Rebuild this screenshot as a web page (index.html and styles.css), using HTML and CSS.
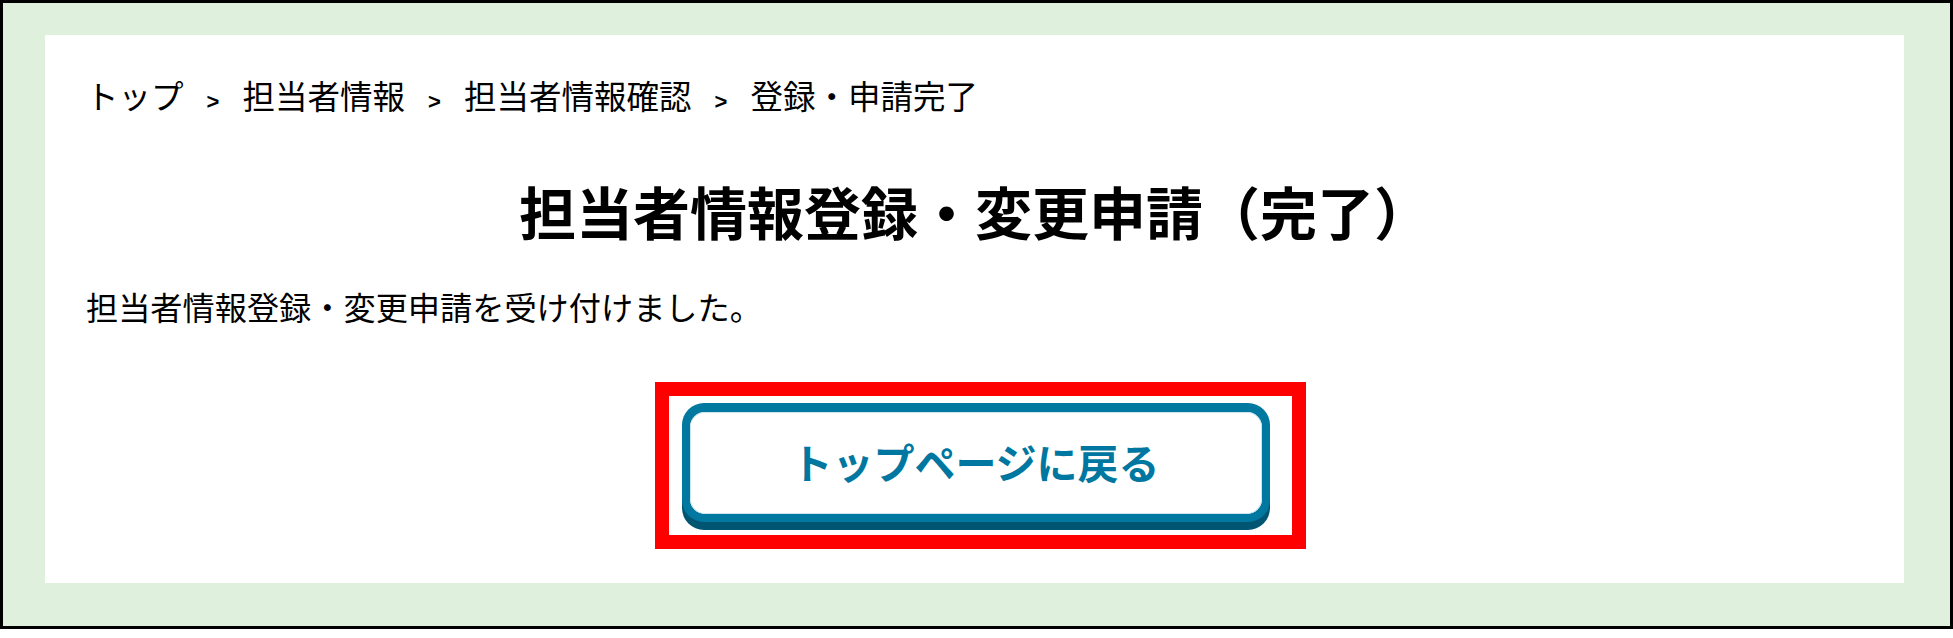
FILE: index.html
```html
<!DOCTYPE html>
<html lang="ja">
<head>
<meta charset="utf-8">
<title>担当者情報登録・変更申請（完了）</title>
<link rel="stylesheet" href="styles.css">
</head>
<body>
<div class="frame">
  <main class="panel">
    <nav class="crumbs">
      <span class="crumb">トップ</span>
      <span class="sep">&gt;</span>
      <span class="crumb">担当者情報</span>
      <span class="sep">&gt;</span>
      <span class="crumb">担当者情報確認</span>
      <span class="sep">&gt;</span>
      <span class="crumb">登録・申請完了</span>
    </nav>
    <h1 class="title">担当者情報登録・変更申請（完了）</h1>
    <p class="message">担当者情報登録・変更申請を受け付けました。</p>
    <div class="action-row">
      <div class="highlight">
        <a class="btn" href="#"><span class="btn-face">トップページに戻る</span></a>
      </div>
    </div>
  </main>
</div>
</body>
</html>
```

FILE: styles.css
```css
html, body {
  margin: 0;
  padding: 0;
  background: #ffffff;
}

body {
  width: 1953px;
  height: 638px;
  overflow: hidden;
  font-family: "Noto Sans CJK JP", "Noto Sans", sans-serif;
  color: #000000;
}

.frame {
  box-sizing: border-box;
  width: 1953px;
  height: 629px;
  border: 3px solid #000000;
  background: #dff0dc;
  padding: 32px 46px 43px 42px;
}

.panel {
  box-sizing: border-box;
  display: block;
  width: 1859px;
  height: 548px;
  background: #ffffff;
  padding: 44px 40px 0 41px;
}

.crumbs {
  display: flex;
  align-items: baseline;
  font-size: 32.5px;
  line-height: 32px;
  height: 32px;
}

.crumb {
  white-space: nowrap;
}

.sep {
  display: inline-block;
  width: 59px;
  text-align: center;
  font-family: "Liberation Sans", sans-serif;
  font-size: 22px;
  font-weight: 700;
  line-height: 21px;
}

.title {
  margin: 71px 0 0 0;
  font-size: 57px;
  line-height: 57px;
  font-weight: 700;
  text-align: center;
  white-space: nowrap;
}

.message {
  margin: 51px 0 0 0;
  font-size: 32.2px;
  line-height: 32px;
  white-space: nowrap;
}

.action-row {
  display: flex;
  justify-content: center;
  margin-top: 60px;
  padding-left: 10px;
}

.highlight {
  border: 14px solid #ff0000;
  padding: 7px 22px 5px 13px;
  width: 588px;
  height: 127px;
}

.btn {
  display: block;
  box-sizing: border-box;
  width: 588px;
  height: 119px;
  padding: 9px 8px 8px 8px;
  border-radius: 22px;
  background: #0078a0;
  box-shadow: 0 8px 0 #005573;
  text-decoration: none;
}

.btn-face {
  display: flex;
  align-items: center;
  justify-content: center;
  height: 102px;
  border-radius: 15px;
  background: #ffffff;
  box-shadow: inset 0 0 0 1px #cde5ee;
  color: #0077a0;
  font-size: 41px;
  font-weight: 700;
  line-height: 41px;
  padding-bottom: 4px;
  box-sizing: border-box;
}
```
